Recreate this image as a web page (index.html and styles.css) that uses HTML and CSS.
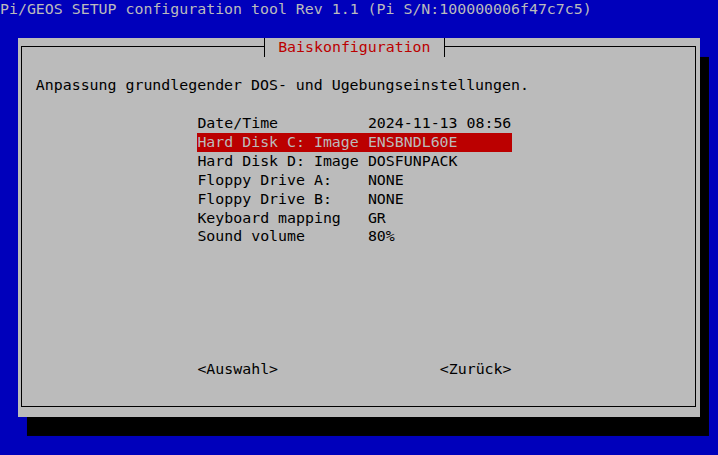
FILE: index.html
```html
<!DOCTYPE html>
<html lang="de">
<head>
<meta charset="utf-8">
<title>Pi/GEOS SETUP</title>
<link rel="stylesheet" href="styles.css">
</head>
<body>
<div class="topline">Pi/GEOS SETUP configuration tool Rev 1.1 (Pi S/N:100000006f47c7c5)</div>
<div class="dialog">
  <div class="frame">
    <div class="caption">Baiskonfiguration</div>
    <p class="prompt">Anpassung grundlegender DOS- und Ugebungseinstellungen.</p>
    <ul class="menu">
      <li class="item"><span class="tag">Date/Time</span><span class="val">2024-11-13 08:56</span></li>
      <li class="item sel"><span class="tag">Hard Disk C: Image</span><span class="val">ENSBNDL60E</span></li>
      <li class="item"><span class="tag">Hard Disk D: Image</span><span class="val">DOSFUNPACK</span></li>
      <li class="item"><span class="tag">Floppy Drive A:</span><span class="val">NONE</span></li>
      <li class="item"><span class="tag">Floppy Drive B:</span><span class="val">NONE</span></li>
      <li class="item"><span class="tag">Keyboard mapping</span><span class="val">GR</span></li>
      <li class="item"><span class="tag">Sound volume</span><span class="val">80%</span></li>
    </ul>
    <div class="buttons"><span class="btn">&lt;Auswahl&gt;</span><span class="btn">&lt;Zurück&gt;</span></div>
  </div>
</div>
</body>
</html>
```
FILE: styles.css
```css
:root {
  --cw: 8.975px;
  --rh: 18.958px;
  --blue: #0000bb;
  --gray: #bbbbbb;
  --red: #bb0000;
}
html, body {
  margin: 0;
  padding: 0;
}
body {
  background: var(--blue);
  width: 718px;
  height: 455px;
  overflow: hidden;
  font-family: "DejaVu Sans Mono", monospace;
  font-size: 14.907px;
  line-height: var(--rh);
  color: #000;
}
.topline {
  height: var(--rh);
  color: var(--gray);
  white-space: pre;
}
.dialog {
  margin-top: var(--rh);
  margin-left: calc(2 * var(--cw));
  width: calc(76 * var(--cw));
  height: calc(20 * var(--rh));
  box-sizing: border-box;
  padding: 8.5px 4px 9.6px 3px;
  background: var(--gray);
  box-shadow: var(--cw) var(--rh) 0 #000;
}
.frame {
  position: relative;
  height: 100%;
  box-sizing: border-box;
  border: 1px solid #000;
  padding: 28.43px 0 0 13.9px;
}
.caption {
  position: absolute;
  top: -9.48px;
  left: 242px;
  height: var(--rh);
  padding: 0 13.2px;
  border-left: 1px solid #000;
  border-right: 1px solid #000;
  background: var(--gray);
  color: var(--red);
  white-space: pre;
}
.prompt {
  margin: 0;
  height: var(--rh);
  white-space: pre;
}
.menu {
  list-style: none;
  margin: var(--rh) 0 0 calc(18 * var(--cw));
  padding: 0;
  width: calc(35 * var(--cw));
}
.item {
  display: flex;
  height: var(--rh);
  white-space: pre;
}
.tag {
  flex: none;
  width: calc(19 * var(--cw));
}
.item.sel {
  background: var(--red);
  color: var(--gray);
}
.buttons {
  display: flex;
  justify-content: space-between;
  margin: calc(6 * var(--rh)) 0 0 calc(18 * var(--cw));
  width: calc(35 * var(--cw));
  height: var(--rh);
  white-space: pre;
}
```
